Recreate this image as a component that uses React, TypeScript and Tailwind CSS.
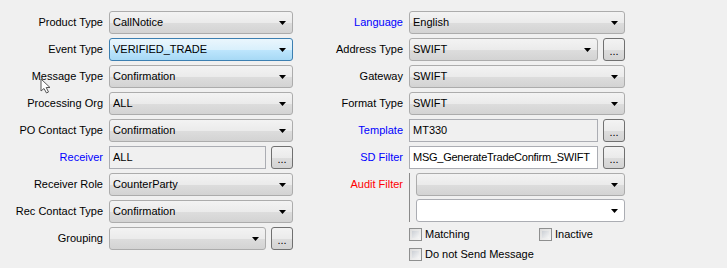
import React from "react";

const comboBg =
  "bg-[linear-gradient(to_bottom,#f3f3f3_0%,#ebebeb_50%,#dddddd_51%,#d3d3d3_100%)] border-[#acacac]";
const comboHot =
  "bg-[linear-gradient(to_bottom,#eaf6fd_0%,#d9f0fc_50%,#bee6fd_51%,#a7d9f5_100%)] border-[#3c7fb1]";

function Arrow() {
  return (
    <svg width="7" height="4" viewBox="0 0 7 4" className="shrink-0">
      <path d="M0 0H7L3.5 4Z" fill="#000" />
    </svg>
  );
}

function Combo({
  value,
  hot,
  editable,
  className = "",
}: {
  value?: string;
  hot?: boolean;
  editable?: boolean;
  className?: string;
}) {
  const look = editable
    ? "bg-white border-[#abadb3]"
    : hot
      ? comboHot
      : comboBg;
  return (
    <div
      className={`h-[23px] flex items-center border rounded-[3px] pl-[3px] pr-[6px] ${look} ${className}`}
    >
      <span className="flex-1 truncate">{value}</span>
      <Arrow />
    </div>
  );
}

function Field({ value, white }: { value: string; white?: boolean }) {
  return (
    <div
      className={`h-[23px] flex-1 flex items-center border border-[#abadb3] pl-[3px] whitespace-nowrap overflow-hidden ${white ? "bg-white tracking-[-0.25px]" : "bg-[#f0f0f0]"}`}
    >
      {value}
    </div>
  );
}

function Dots() {
  return (
    <div
      className={`w-[22px] h-[23px] shrink-0 border rounded-[3px] ${comboBg} !border-[#707070] flex items-end justify-center pb-[3px] leading-none`}
    >
      ...
    </div>
  );
}

function Label({
  text,
  tone = "black",
}: {
  text: string;
  tone?: "black" | "blue" | "red";
}) {
  const color =
    tone === "blue"
      ? "text-[#0000ff]"
      : tone === "red"
        ? "text-[#ff0000]"
        : "text-black";
  return (
    <div className={`h-[23px] flex items-center justify-end ${color}`}>
      {text}
    </div>
  );
}

function Check({ label }: { label: string }) {
  return (
    <div className="h-[13px] flex items-center gap-[3px]">
      <div className="w-[13px] h-[13px] border border-[#8e8f8f] bg-[linear-gradient(135deg,#dcdcdc,#f6f6f6)] p-[2px]">
        <div className="w-full h-full bg-[linear-gradient(135deg,#cbcfd5,#f6f6f6)]" />
      </div>
      <span>{label}</span>
    </div>
  );
}

function Cursor() {
  return (
    <svg
      width="13"
      height="16"
      viewBox="0 0 13 16"
      className="absolute left-[40px] top-[78px]"
    >
      <path
        d="M1 1V13L4 10.5L6.5 15L8.5 14L6.2 9.5H10Z"
        fill="#fff"
        stroke="#555"
        strokeWidth="1"
        strokeLinejoin="round"
      />
    </svg>
  );
}

export default function App() {
  return (
    <div className="relative w-[727px] h-[268px] bg-[#f0f0f0] text-[11px] text-black font-['Liberation_Sans',Tahoma,sans-serif] flex pt-[11px] overflow-hidden">
      {/* left column */}
      <div className="grid grid-cols-[103px_184px] gap-x-[6px] gap-y-[4px] content-start">
        <Label text="Product Type" />
        <Combo value="CallNotice" />
        <Label text="Event Type" />
        <Combo value="VERIFIED_TRADE" hot />
        <Label text="Message Type" />
        <Combo value="Confirmation" />
        <Label text="Processing Org" />
        <Combo value="ALL" />
        <Label text="PO Contact Type" />
        <Combo value="Confirmation" />
        <Label text="Receiver" tone="blue" />
        <div className="flex gap-[5px]">
          <Field value="ALL" />
          <Dots />
        </div>
        <Label text="Receiver Role" />
        <Combo value="CounterParty" />
        <Label text="Rec Contact Type" />
        <Combo value="Confirmation" />
        <Label text="Grouping" />
        <div className="flex gap-[5px]">
          <Combo className="flex-1" />
          <Dots />
        </div>
      </div>

      {/* right column */}
      <div className="ml-[10px] grid grid-cols-[100px_216px] gap-x-[6px] gap-y-[4px] content-start">
        <Label text="Language" tone="blue" />
        <Combo value="English" />
        <Label text="Address Type" />
        <div className="flex gap-[5px]">
          <Combo value="SWIFT" className="flex-1" />
          <Dots />
        </div>
        <Label text="Gateway" />
        <Combo value="SWIFT" />
        <Label text="Format Type" />
        <Combo value="SWIFT" />
        <Label text="Template" tone="blue" />
        <div className="flex gap-[5px]">
          <Field value="MT330" />
          <Dots />
        </div>
        <Label text="SD Filter" tone="blue" />
        <div className="flex gap-[5px]">
          <Field value="MSG_GenerateTradeConfirm_SWIFT" white />
          <Dots />
        </div>
        <Label text="Audit Filter" tone="red" />
        <div className="row-span-2 flex flex-col gap-[3px] border-l border-[#8a8a8a] pl-[6px]">
          <Combo />
          <Combo editable />
        </div>
        <div />
        <div />
        <div className="col-start-2 grid grid-cols-[130px_1fr] gap-y-[7px] mt-[2px]">
          <Check label="Matching" />
          <Check label="Inactive" />
          <Check label="Do not Send Message" />
        </div>
      </div>

      <Cursor />
    </div>
  );
}
